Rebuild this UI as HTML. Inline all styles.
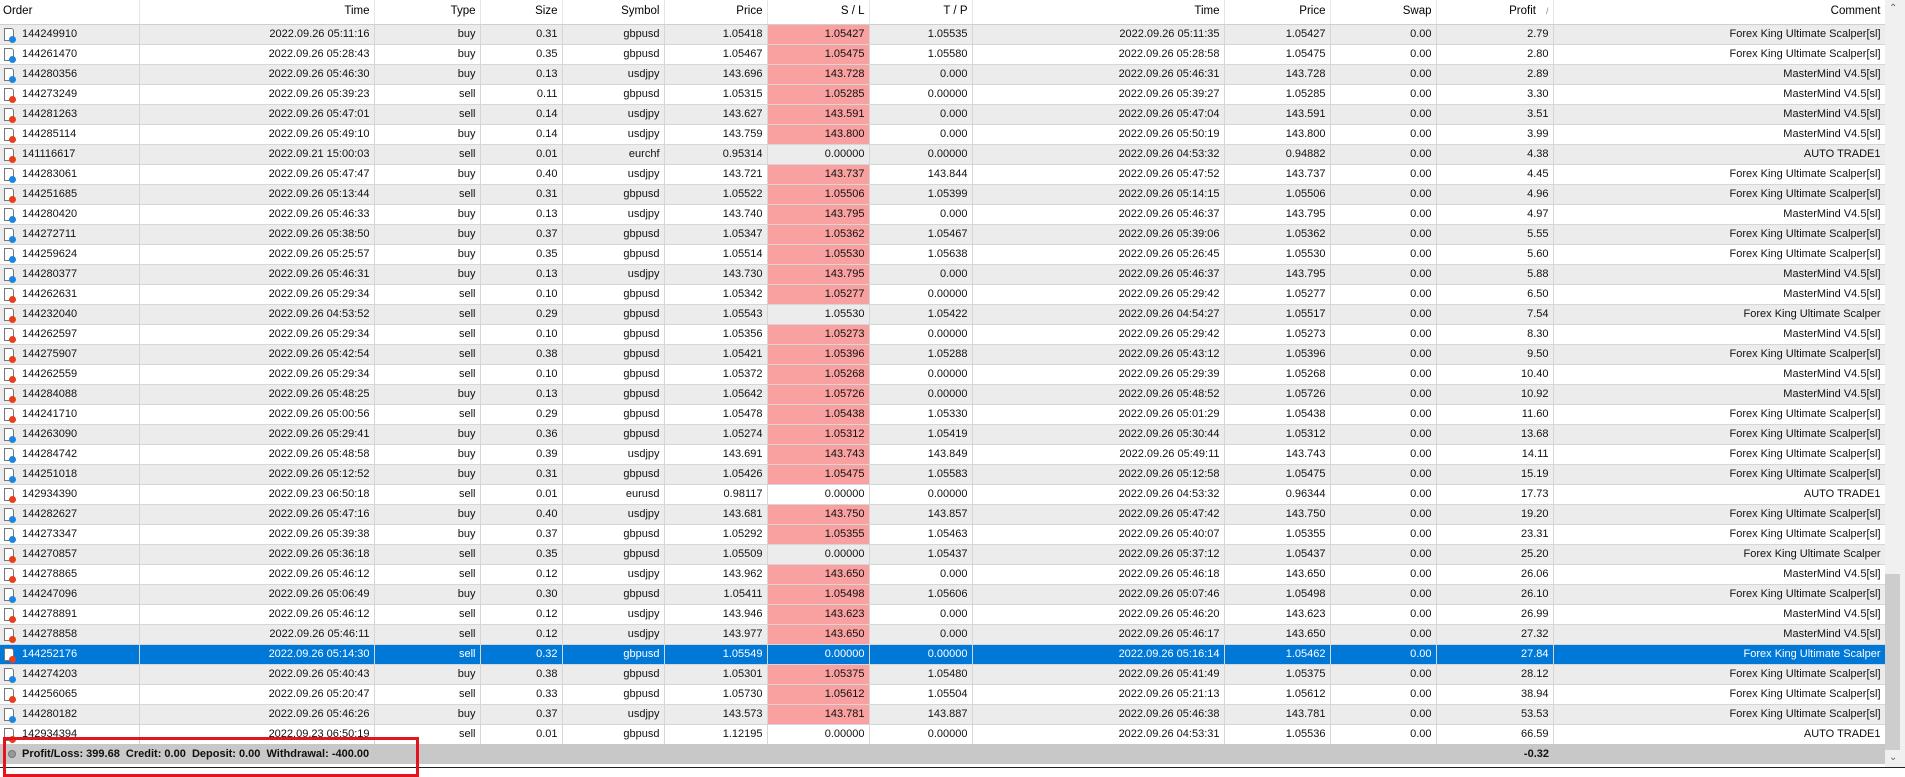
<!DOCTYPE html>
<html><head><meta charset="utf-8"><style>
*{margin:0;padding:0;box-sizing:border-box}
body{width:1905px;height:771px;overflow:hidden;background:#fff;font-family:"Liberation Sans",Arial,sans-serif;font-size:11px;color:#111;position:relative}
table{position:absolute;left:0;top:0;width:1885px;border-collapse:collapse;table-layout:fixed}
td,th{height:20px;line-height:19px;padding:0 4px 0 3px;text-align:right;white-space:nowrap;overflow:hidden;border-right:1px solid #d6d6d6;border-bottom:1px solid #d6d6d6;font-weight:normal}
th{height:24px;line-height:23px;border-right:1px solid #e6e6e6;border-bottom:1px solid #cfcfcf;font-size:11.5px;color:#000}
th:first-child,td:first-child{text-align:left}
td:first-child{position:relative;padding-left:22px}
tr:nth-child(even) td{background:#ececec}
td.p{background:#f9a0a0!important}
tr.sel td{background:#0078d7!important;color:#fff}
.ic{position:absolute;left:4px;top:3px;width:10px;height:13px;border:1px solid #777;background:#fff;border-top-right-radius:3px}
.ic::after{content:"";position:absolute;right:-3px;bottom:-3px;width:7px;height:7px;border-radius:50%;background:#1f86e0}
.s .ic::after{background:#e8401c}
.sort{color:#888;font-size:9px;margin-left:10px}
#sb{position:absolute;left:1885px;top:0;width:20px;height:767px;background:#f0f0f0}
#thumb{position:absolute;left:1885px;top:574px;width:15px;height:176px;background:#cdcdcd}
#tot{position:absolute;left:0;top:744px;width:1885px;height:20px;background:#c8c8c8;font-weight:bold;font-size:11px;line-height:20px}
#tot .l{position:absolute;left:22px}
#tot .r{position:absolute;left:1436px;width:117px;text-align:right;padding-right:4px}
#tot .dot{position:absolute;left:8px;top:6px;width:8px;height:8px;border-radius:50%;background:#999;border:1px solid #777}
#bot{position:absolute;left:0;top:767px;width:1905px;height:4px;border-top:1px solid #222;background:#fff}
#red{position:absolute;left:3px;top:737px;width:416px;height:40px;border:3px solid #e3141c}
.arr{position:absolute;left:1889px;font-size:10px;color:#666}
</style></head><body>
<table>
<colgroup><col style="width:139px"><col style="width:235px"><col style="width:106px"><col style="width:82px"><col style="width:102px"><col style="width:103px"><col style="width:102px"><col style="width:103px"><col style="width:252px"><col style="width:106px"><col style="width:106px"><col style="width:117px"><col style="width:332px"></colgroup>
<tr><th>Order</th><th>Time</th><th>Type</th><th>Size</th><th>Symbol</th><th>Price</th><th>S / L</th><th>T / P</th><th>Time</th><th>Price</th><th>Swap</th><th>Profit<span class="sort">/</span></th><th>Comment</th></tr>
<tr><td><i class="ic"></i>144249910</td><td>2022.09.26 05:11:16</td><td>buy</td><td>0.31</td><td>gbpusd</td><td>1.05418</td><td class="p">1.05427</td><td>1.05535</td><td>2022.09.26 05:11:35</td><td>1.05427</td><td>0.00</td><td>2.79</td><td>Forex King Ultimate Scalper[sl]</td></tr>
<tr><td><i class="ic"></i>144261470</td><td>2022.09.26 05:28:43</td><td>buy</td><td>0.35</td><td>gbpusd</td><td>1.05467</td><td class="p">1.05475</td><td>1.05580</td><td>2022.09.26 05:28:58</td><td>1.05475</td><td>0.00</td><td>2.80</td><td>Forex King Ultimate Scalper[sl]</td></tr>
<tr><td><i class="ic"></i>144280356</td><td>2022.09.26 05:46:30</td><td>buy</td><td>0.13</td><td>usdjpy</td><td>143.696</td><td class="p">143.728</td><td>0.000</td><td>2022.09.26 05:46:31</td><td>143.728</td><td>0.00</td><td>2.89</td><td>MasterMind V4.5[sl]</td></tr>
<tr class="s"><td><i class="ic"></i>144273249</td><td>2022.09.26 05:39:23</td><td>sell</td><td>0.11</td><td>gbpusd</td><td>1.05315</td><td class="p">1.05285</td><td>0.00000</td><td>2022.09.26 05:39:27</td><td>1.05285</td><td>0.00</td><td>3.30</td><td>MasterMind V4.5[sl]</td></tr>
<tr class="s"><td><i class="ic"></i>144281263</td><td>2022.09.26 05:47:01</td><td>sell</td><td>0.14</td><td>usdjpy</td><td>143.627</td><td class="p">143.591</td><td>0.000</td><td>2022.09.26 05:47:04</td><td>143.591</td><td>0.00</td><td>3.51</td><td>MasterMind V4.5[sl]</td></tr>
<tr class="s"><td><i class="ic"></i>144285114</td><td>2022.09.26 05:49:10</td><td>buy</td><td>0.14</td><td>usdjpy</td><td>143.759</td><td class="p">143.800</td><td>0.000</td><td>2022.09.26 05:50:19</td><td>143.800</td><td>0.00</td><td>3.99</td><td>MasterMind V4.5[sl]</td></tr>
<tr class="s"><td><i class="ic"></i>141116617</td><td>2022.09.21 15:00:03</td><td>sell</td><td>0.01</td><td>eurchf</td><td>0.95314</td><td>0.00000</td><td>0.00000</td><td>2022.09.26 04:53:32</td><td>0.94882</td><td>0.00</td><td>4.38</td><td>AUTO TRADE1</td></tr>
<tr><td><i class="ic"></i>144283061</td><td>2022.09.26 05:47:47</td><td>buy</td><td>0.40</td><td>usdjpy</td><td>143.721</td><td class="p">143.737</td><td>143.844</td><td>2022.09.26 05:47:52</td><td>143.737</td><td>0.00</td><td>4.45</td><td>Forex King Ultimate Scalper[sl]</td></tr>
<tr class="s"><td><i class="ic"></i>144251685</td><td>2022.09.26 05:13:44</td><td>sell</td><td>0.31</td><td>gbpusd</td><td>1.05522</td><td class="p">1.05506</td><td>1.05399</td><td>2022.09.26 05:14:15</td><td>1.05506</td><td>0.00</td><td>4.96</td><td>Forex King Ultimate Scalper[sl]</td></tr>
<tr><td><i class="ic"></i>144280420</td><td>2022.09.26 05:46:33</td><td>buy</td><td>0.13</td><td>usdjpy</td><td>143.740</td><td class="p">143.795</td><td>0.000</td><td>2022.09.26 05:46:37</td><td>143.795</td><td>0.00</td><td>4.97</td><td>MasterMind V4.5[sl]</td></tr>
<tr><td><i class="ic"></i>144272711</td><td>2022.09.26 05:38:50</td><td>buy</td><td>0.37</td><td>gbpusd</td><td>1.05347</td><td class="p">1.05362</td><td>1.05467</td><td>2022.09.26 05:39:06</td><td>1.05362</td><td>0.00</td><td>5.55</td><td>Forex King Ultimate Scalper[sl]</td></tr>
<tr><td><i class="ic"></i>144259624</td><td>2022.09.26 05:25:57</td><td>buy</td><td>0.35</td><td>gbpusd</td><td>1.05514</td><td class="p">1.05530</td><td>1.05638</td><td>2022.09.26 05:26:45</td><td>1.05530</td><td>0.00</td><td>5.60</td><td>Forex King Ultimate Scalper[sl]</td></tr>
<tr><td><i class="ic"></i>144280377</td><td>2022.09.26 05:46:31</td><td>buy</td><td>0.13</td><td>usdjpy</td><td>143.730</td><td class="p">143.795</td><td>0.000</td><td>2022.09.26 05:46:37</td><td>143.795</td><td>0.00</td><td>5.88</td><td>MasterMind V4.5[sl]</td></tr>
<tr class="s"><td><i class="ic"></i>144262631</td><td>2022.09.26 05:29:34</td><td>sell</td><td>0.10</td><td>gbpusd</td><td>1.05342</td><td class="p">1.05277</td><td>0.00000</td><td>2022.09.26 05:29:42</td><td>1.05277</td><td>0.00</td><td>6.50</td><td>MasterMind V4.5[sl]</td></tr>
<tr class="s"><td><i class="ic"></i>144232040</td><td>2022.09.26 04:53:52</td><td>sell</td><td>0.29</td><td>gbpusd</td><td>1.05543</td><td>1.05530</td><td>1.05422</td><td>2022.09.26 04:54:27</td><td>1.05517</td><td>0.00</td><td>7.54</td><td>Forex King Ultimate Scalper</td></tr>
<tr class="s"><td><i class="ic"></i>144262597</td><td>2022.09.26 05:29:34</td><td>sell</td><td>0.10</td><td>gbpusd</td><td>1.05356</td><td class="p">1.05273</td><td>0.00000</td><td>2022.09.26 05:29:42</td><td>1.05273</td><td>0.00</td><td>8.30</td><td>MasterMind V4.5[sl]</td></tr>
<tr class="s"><td><i class="ic"></i>144275907</td><td>2022.09.26 05:42:54</td><td>sell</td><td>0.38</td><td>gbpusd</td><td>1.05421</td><td class="p">1.05396</td><td>1.05288</td><td>2022.09.26 05:43:12</td><td>1.05396</td><td>0.00</td><td>9.50</td><td>Forex King Ultimate Scalper[sl]</td></tr>
<tr class="s"><td><i class="ic"></i>144262559</td><td>2022.09.26 05:29:34</td><td>sell</td><td>0.10</td><td>gbpusd</td><td>1.05372</td><td class="p">1.05268</td><td>0.00000</td><td>2022.09.26 05:29:39</td><td>1.05268</td><td>0.00</td><td>10.40</td><td>MasterMind V4.5[sl]</td></tr>
<tr class="s"><td><i class="ic"></i>144284088</td><td>2022.09.26 05:48:25</td><td>buy</td><td>0.13</td><td>gbpusd</td><td>1.05642</td><td class="p">1.05726</td><td>0.00000</td><td>2022.09.26 05:48:52</td><td>1.05726</td><td>0.00</td><td>10.92</td><td>MasterMind V4.5[sl]</td></tr>
<tr class="s"><td><i class="ic"></i>144241710</td><td>2022.09.26 05:00:56</td><td>sell</td><td>0.29</td><td>gbpusd</td><td>1.05478</td><td class="p">1.05438</td><td>1.05330</td><td>2022.09.26 05:01:29</td><td>1.05438</td><td>0.00</td><td>11.60</td><td>Forex King Ultimate Scalper[sl]</td></tr>
<tr><td><i class="ic"></i>144263090</td><td>2022.09.26 05:29:41</td><td>buy</td><td>0.36</td><td>gbpusd</td><td>1.05274</td><td class="p">1.05312</td><td>1.05419</td><td>2022.09.26 05:30:44</td><td>1.05312</td><td>0.00</td><td>13.68</td><td>Forex King Ultimate Scalper[sl]</td></tr>
<tr><td><i class="ic"></i>144284742</td><td>2022.09.26 05:48:58</td><td>buy</td><td>0.39</td><td>usdjpy</td><td>143.691</td><td class="p">143.743</td><td>143.849</td><td>2022.09.26 05:49:11</td><td>143.743</td><td>0.00</td><td>14.11</td><td>Forex King Ultimate Scalper[sl]</td></tr>
<tr><td><i class="ic"></i>144251018</td><td>2022.09.26 05:12:52</td><td>buy</td><td>0.31</td><td>gbpusd</td><td>1.05426</td><td class="p">1.05475</td><td>1.05583</td><td>2022.09.26 05:12:58</td><td>1.05475</td><td>0.00</td><td>15.19</td><td>Forex King Ultimate Scalper[sl]</td></tr>
<tr class="s"><td><i class="ic"></i>142934390</td><td>2022.09.23 06:50:18</td><td>sell</td><td>0.01</td><td>eurusd</td><td>0.98117</td><td>0.00000</td><td>0.00000</td><td>2022.09.26 04:53:32</td><td>0.96344</td><td>0.00</td><td>17.73</td><td>AUTO TRADE1</td></tr>
<tr><td><i class="ic"></i>144282627</td><td>2022.09.26 05:47:16</td><td>buy</td><td>0.40</td><td>usdjpy</td><td>143.681</td><td class="p">143.750</td><td>143.857</td><td>2022.09.26 05:47:42</td><td>143.750</td><td>0.00</td><td>19.20</td><td>Forex King Ultimate Scalper[sl]</td></tr>
<tr><td><i class="ic"></i>144273347</td><td>2022.09.26 05:39:38</td><td>buy</td><td>0.37</td><td>gbpusd</td><td>1.05292</td><td class="p">1.05355</td><td>1.05463</td><td>2022.09.26 05:40:07</td><td>1.05355</td><td>0.00</td><td>23.31</td><td>Forex King Ultimate Scalper[sl]</td></tr>
<tr class="s"><td><i class="ic"></i>144270857</td><td>2022.09.26 05:36:18</td><td>sell</td><td>0.35</td><td>gbpusd</td><td>1.05509</td><td>0.00000</td><td>1.05437</td><td>2022.09.26 05:37:12</td><td>1.05437</td><td>0.00</td><td>25.20</td><td>Forex King Ultimate Scalper</td></tr>
<tr class="s"><td><i class="ic"></i>144278865</td><td>2022.09.26 05:46:12</td><td>sell</td><td>0.12</td><td>usdjpy</td><td>143.962</td><td class="p">143.650</td><td>0.000</td><td>2022.09.26 05:46:18</td><td>143.650</td><td>0.00</td><td>26.06</td><td>MasterMind V4.5[sl]</td></tr>
<tr><td><i class="ic"></i>144247096</td><td>2022.09.26 05:06:49</td><td>buy</td><td>0.30</td><td>gbpusd</td><td>1.05411</td><td class="p">1.05498</td><td>1.05606</td><td>2022.09.26 05:07:46</td><td>1.05498</td><td>0.00</td><td>26.10</td><td>Forex King Ultimate Scalper[sl]</td></tr>
<tr class="s"><td><i class="ic"></i>144278891</td><td>2022.09.26 05:46:12</td><td>sell</td><td>0.12</td><td>usdjpy</td><td>143.946</td><td class="p">143.623</td><td>0.000</td><td>2022.09.26 05:46:20</td><td>143.623</td><td>0.00</td><td>26.99</td><td>MasterMind V4.5[sl]</td></tr>
<tr class="s"><td><i class="ic"></i>144278858</td><td>2022.09.26 05:46:11</td><td>sell</td><td>0.12</td><td>usdjpy</td><td>143.977</td><td class="p">143.650</td><td>0.000</td><td>2022.09.26 05:46:17</td><td>143.650</td><td>0.00</td><td>27.32</td><td>MasterMind V4.5[sl]</td></tr>
<tr class="s sel"><td><i class="ic"></i>144252176</td><td>2022.09.26 05:14:30</td><td>sell</td><td>0.32</td><td>gbpusd</td><td>1.05549</td><td>0.00000</td><td>0.00000</td><td>2022.09.26 05:16:14</td><td>1.05462</td><td>0.00</td><td>27.84</td><td>Forex King Ultimate Scalper</td></tr>
<tr><td><i class="ic"></i>144274203</td><td>2022.09.26 05:40:43</td><td>buy</td><td>0.38</td><td>gbpusd</td><td>1.05301</td><td class="p">1.05375</td><td>1.05480</td><td>2022.09.26 05:41:49</td><td>1.05375</td><td>0.00</td><td>28.12</td><td>Forex King Ultimate Scalper[sl]</td></tr>
<tr class="s"><td><i class="ic"></i>144256065</td><td>2022.09.26 05:20:47</td><td>sell</td><td>0.33</td><td>gbpusd</td><td>1.05730</td><td class="p">1.05612</td><td>1.05504</td><td>2022.09.26 05:21:13</td><td>1.05612</td><td>0.00</td><td>38.94</td><td>Forex King Ultimate Scalper[sl]</td></tr>
<tr><td><i class="ic"></i>144280182</td><td>2022.09.26 05:46:26</td><td>buy</td><td>0.37</td><td>usdjpy</td><td>143.573</td><td class="p">143.781</td><td>143.887</td><td>2022.09.26 05:46:38</td><td>143.781</td><td>0.00</td><td>53.53</td><td>Forex King Ultimate Scalper[sl]</td></tr>
<tr class="s"><td><i class="ic"></i>142934394</td><td>2022.09.23 06:50:19</td><td>sell</td><td>0.01</td><td>gbpusd</td><td>1.12195</td><td>0.00000</td><td>0.00000</td><td>2022.09.26 04:53:31</td><td>1.05536</td><td>0.00</td><td>66.59</td><td>AUTO TRADE1</td></tr>
</table>
<div id="sb"></div><div id="thumb"></div>
<div class="arr" style="top:3px">&#8963;</div>
<div class="arr" style="top:752px">&#8964;</div>
<div id="tot"><span class="dot"></span><span class="l">Profit/Loss: 399.68&nbsp; Credit: 0.00&nbsp; Deposit: 0.00&nbsp; Withdrawal: -400.00</span><span class="r">-0.32</span></div>
<div id="bot"></div>
<div id="red"></div>
</body></html>
